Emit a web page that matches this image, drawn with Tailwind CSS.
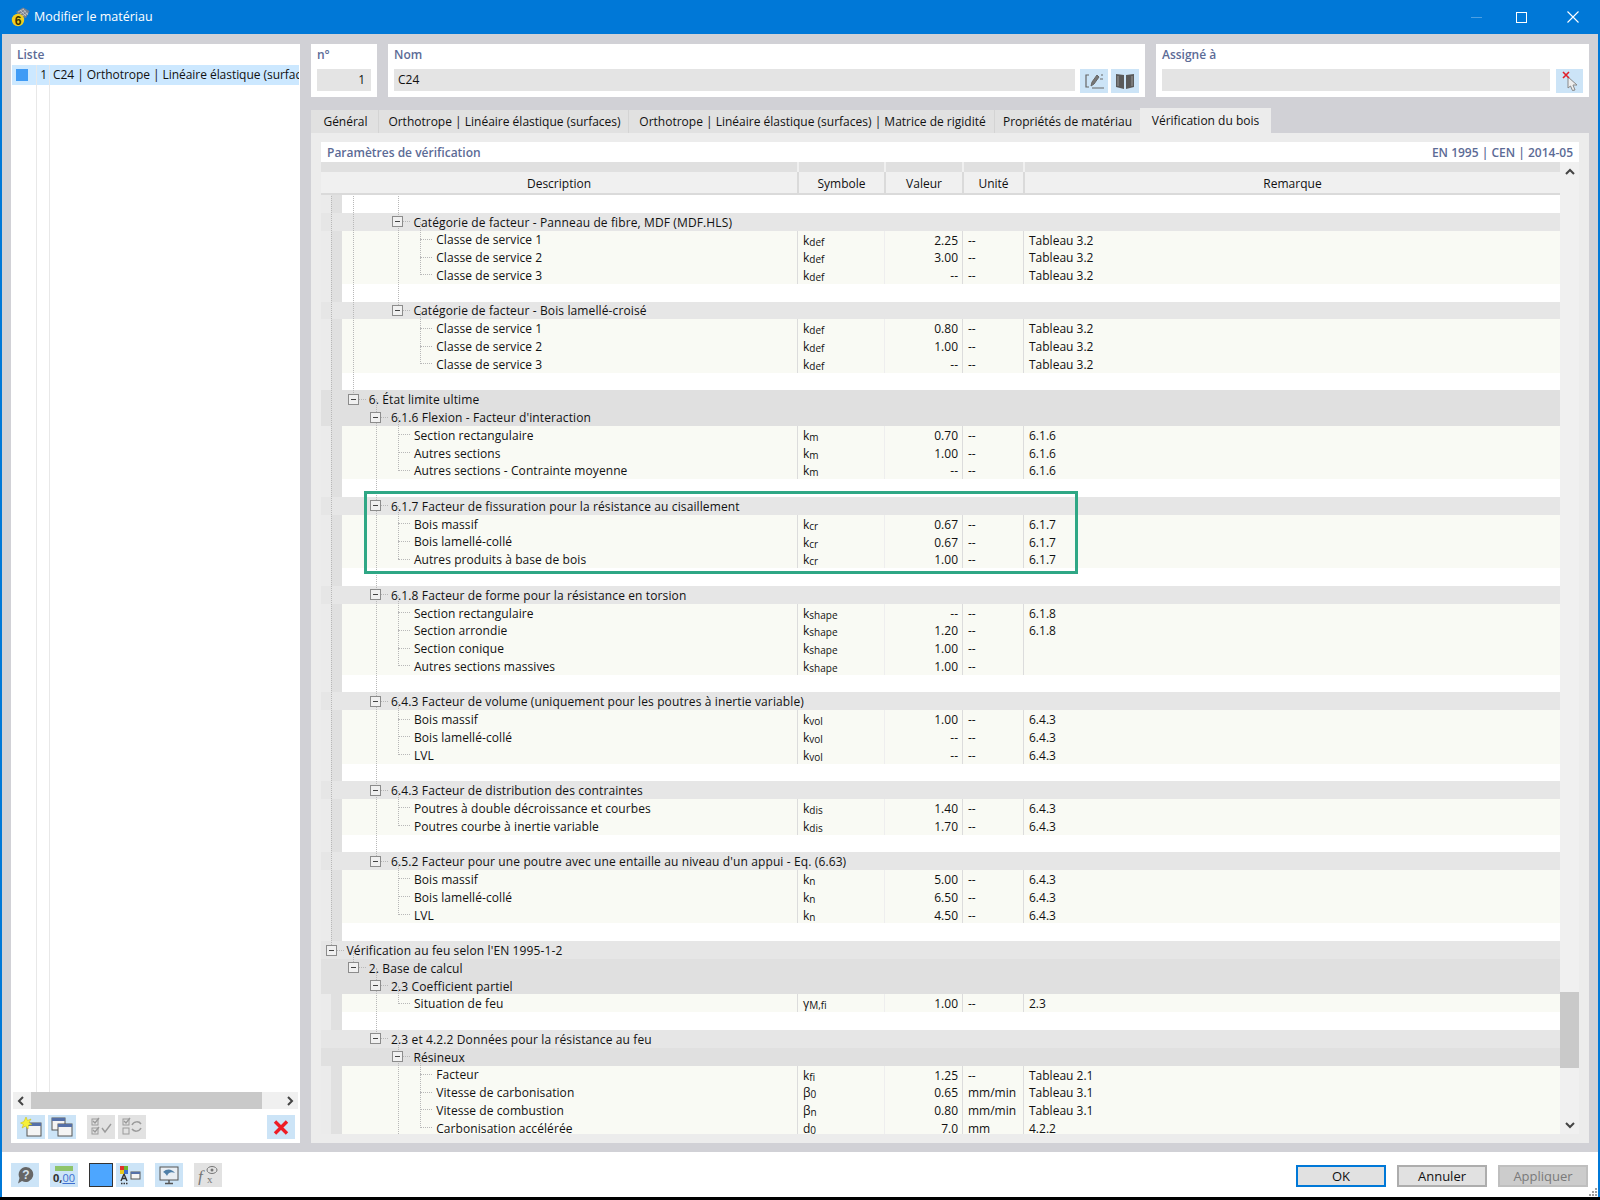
<!DOCTYPE html>
<html lang="fr">
<head>
<meta charset="UTF-8">
<title>Modifier le matériau</title>
<script src="https://cdn.jsdelivr.net/npm/@tailwindcss/browser@4"></script>
</head>
<body class="bg-black">
<div class="w-[1600px] h-[1197px] flex flex-col overflow-hidden border-x-2 border-[#0078d7] font-['Open_Sans','Noto_Sans',sans-serif] text-[12px] text-[#111]">

  <!-- title bar -->
  <header class="h-[34px] flex-none bg-[#0078d7] flex items-center text-white">
    <svg class="ml-[8px] w-[20px] h-[20px]" viewBox="0 0 20 20">
      <path d="M6 5 L13 0.5 L19.5 4 L16 11 L9 9 Z" fill="#77808c"/>
      <path d="M8 5 L14 2 M10 7 L16 4 M12 9 L18 6 M10 3 L16 9 M13 2 L18 8" stroke="#c4c8ce" stroke-width=".8"/>
      <circle cx="8" cy="13" r="6.2" fill="#f2cf1f"/>
      <text x="8" y="17.5" text-anchor="middle" font-size="12" font-weight="700" fill="#3a3200" font-family="Liberation Sans">6</text>
    </svg>
    <span class="ml-[4px] text-[12.5px]">Modifier le matériau</span>
    <div class="ml-auto flex items-center">
      <span class="w-[11px] h-px bg-white/30 mr-[34px]"></span>
      <span class="w-[11px] h-[11px] border border-white mr-[40px]"></span>
      <svg class="w-[12px] h-[12px] mr-[19px]" viewBox="0 0 12 12"><path d="M0.5 0.5 L11.5 11.5 M11.5 0.5 L0.5 11.5" stroke="#fff" stroke-width="1.1"/></svg>
    </div>
  </header>

  <!-- main area -->
  <main class="flex-1 min-h-0 bg-[#d1d1d6] flex gap-[11px] pl-[9px] pr-[9px] pt-[10px] pb-[9px]">

    <!-- list -->
    <aside class="w-[289px] flex-none bg-white flex flex-col">
      <div class="h-[21px] pl-[6px] pt-[2px] font-semibold text-[#5c6b96]">Liste</div>
      <div class="flex-1 min-h-0 relative mx-px">
        <div class="h-[20px] bg-[#cce8ff] flex items-center whitespace-nowrap overflow-hidden tracking-[-0.05px]">
          <span class="ml-[4px] w-[12px] h-[12px] bg-[#3f9bf5] flex-none -mt-[1px]"></span>
          <span class="w-[19px] flex-none text-right">1</span>
          <span class="ml-[6px]">C24 | Orthotrope | Linéaire élastique (surfaces)</span>
        </div>
        <span class="absolute left-[24px] top-0 bottom-0 w-px bg-[#e8e8e8]"></span>
        <span class="absolute left-[37px] top-0 bottom-0 w-px bg-[#e8e8e8]"></span>
      </div>
      <div class="h-[17px] mx-[2px] bg-[#f0f0f0] flex items-center justify-between relative z-10">
        <svg class="w-[16px] h-[12px]" viewBox="0 0 16 12"><path d="M10 2 L6 6 L10 10" fill="none" stroke="#444" stroke-width="2"/></svg>
        <span class="absolute left-[18px] w-[231px] h-full bg-[#c9c9c9]"></span>
        <svg class="w-[16px] h-[12px]" viewBox="0 0 16 12"><path d="M6 2 L10 6 L6 10" fill="none" stroke="#444" stroke-width="2"/></svg>
      </div>
      <div class="h-[34px] flex items-start pt-[6px] pl-[6px]">
        <span class="w-[28px] h-[24px] bg-[#cce4f7] flex items-center justify-center">
          <svg class="w-[22px] h-[20px]" viewBox="0 0 22 20"><rect x="7" y="6" width="14" height="13" fill="#f4f4f4" stroke="#555"/><rect x="7" y="6" width="14" height="3" fill="#5570a8"/><path d="M6 0 L7.5 3.5 L11 2 L9 5.5 L12 7.5 L8.5 8 L8 12 L5.5 9 L2 11 L3.5 7.5 L0.5 6 L4 4.5 Z" fill="#f6f03a" stroke="#c9b800" stroke-width=".5"/></svg>
        </span>
        <span class="ml-[3px] w-[28px] h-[24px] bg-[#cce4f7] flex items-center justify-center">
          <svg class="w-[22px] h-[20px]" viewBox="0 0 22 20"><rect x="1" y="1" width="13" height="12" fill="#f4f4f4" stroke="#555"/><rect x="1" y="1" width="13" height="3" fill="#5570a8"/><rect x="7" y="7" width="14" height="12" fill="#f4f4f4" stroke="#555"/><rect x="7" y="7" width="14" height="3" fill="#5570a8"/></svg>
        </span>
        <span class="ml-[11px] w-[28px] h-[24px] bg-[#e2e2e2] flex items-center justify-center">
          <svg class="w-[22px] h-[20px]" viewBox="0 0 22 20" fill="none" stroke="#9a9a9a"><rect x="2" y="2" width="6" height="6"/><rect x="2" y="11" width="6" height="6"/><path d="M3 4 L5 6 L9 1 M3 13 L5 15 L9 10 M12 11 L15 15 L21 7" stroke-width="1.4"/></svg>
        </span>
        <span class="ml-[3px] w-[28px] h-[24px] bg-[#e2e2e2] flex items-center justify-center">
          <svg class="w-[22px] h-[20px]" viewBox="0 0 22 20" fill="none" stroke="#9a9a9a"><rect x="2" y="2" width="6" height="6"/><rect x="2" y="11" width="6" height="6"/><path d="M3 4 L5 6 L9 1" stroke-width="1.4"/><path d="M11 8 C13 4 18 4 20 7 M20 11 C18 15 13 15 11 12" stroke-width="1.5"/></svg>
        </span>
        <span class="ml-[121px] w-[28px] h-[24px] bg-[#cce4f7] flex items-center justify-center">
          <svg class="w-[16px] h-[15px]" viewBox="0 0 16 15"><path d="M2 1.5 L14 13.5 M14 1.5 L2 13.5" stroke="#ee1c25" stroke-width="3.4"/></svg>
        </span>
      </div>
    </aside>

    <!-- right side -->
    <section class="flex-1 min-w-0 flex flex-col">
      <div class="h-[53px] flex-none flex gap-[11px]">
        <div class="w-[67px] bg-white px-[6px]">
          <div class="h-[25px] pt-[2px] font-semibold text-[#5c6b96]">n°</div>
          <div class="h-[22px] bg-[#e4e4e4] text-right pr-[6px] leading-[22px]">1</div>
        </div>
        <div class="w-[757px] bg-white px-[6px] ">
          <div class="h-[25px] pt-[2px] font-semibold text-[#5c6b96]">Nom</div>
          <div class="flex gap-[3px]">
            <div class="w-[681px] h-[22px] bg-[#e4e4e4] pl-[4px] leading-[22px] mr-[2px]">C24</div>
            <span class="w-[28px] h-[24px] bg-[#cce4f7] flex items-center justify-center">
              <svg class="w-[22px] h-[20px]" viewBox="0 0 22 20" fill="none" stroke="#666"><path d="M6 4 H3 V16 H6 M9 17 H21" stroke-width="1.2"/><path d="M8 15 L9 11 L14 4 L16 6 L11 13 Z" fill="#777"/><path d="M18 4 L20 4 M17 8 L20 8" stroke-width="1"/></svg>
            </span>
            <span class="w-[28px] h-[24px] bg-[#cce4f7] flex items-center justify-center">
              <svg class="w-[20px] h-[18px]" viewBox="0 0 20 18"><path d="M1 2 L9 3 V17 L1 15 Z M19 2 L11 3 V17 L19 15 Z" fill="#5a5a5a"/><path d="M3 4 V14 M17 4 V14" stroke="#999" stroke-width="1"/></svg>
            </span>
          </div>
        </div>
        <div class="flex-1 bg-white px-[6px]">
          <div class="h-[25px] pt-[2px] font-semibold text-[#5c6b96]">Assigné à</div>
          <div class="flex gap-[6px]">
            <div class="w-[388px] h-[22px] bg-[#e4e4e4]"></div>
            <span class="w-[27px] h-[24px] bg-[#cce4f7] flex items-center justify-center">
              <svg class="w-[20px] h-[20px]" viewBox="0 0 20 20"><path d="M8 6 L17 14 L13 14 L15 19 L12.5 19.5 L10.5 15 L8 17 Z" fill="#eee" stroke="#888"/><path d="M3 1 L9 7 M9 1 L3 7" stroke="#e0202a" stroke-width="1.6"/></svg>
            </span>
          </div>
        </div>
      </div>

      <!-- tabs -->
      <div class="h-[25px] mt-[11px] flex-none flex items-end whitespace-nowrap">
        <div class="w-[68px] h-[23px] pl-[2px] bg-[#e1e1e1] border-r border-[#d4d4d4] text-center leading-[23px]">Général</div>
        <div class="w-[250px] h-[23px] pl-[2px] bg-[#e1e1e1] border-r border-[#d4d4d4] text-center leading-[23px]">Orthotrope | Linéaire élastique (surfaces)</div>
        <div class="w-[366px] h-[23px] pl-[2px] bg-[#e1e1e1] border-r border-[#d4d4d4] text-center leading-[23px]">Orthotrope | Linéaire élastique (surfaces) | Matrice de rigidité</div>
        <div class="w-[145px] h-[23px] bg-[#e1e1e1] text-center leading-[23px]">Propriétés de matériau</div>
        <div class="w-[131px] h-[25px] bg-[#ececec] text-center leading-[25px]">Vérification du bois</div>
      </div>

      <!-- panel -->
      <div class="flex-1 min-h-0 bg-[#ececec] pt-[9px] pb-[9px] pl-[10px] pr-[10px] flex flex-col">
        <div class="h-[20px] flex-none bg-white flex items-center justify-between px-[6px] pt-[2px] font-semibold text-[#5c6b96]">
          <span>Paramètres de vérification</span><span>EN 1995 | CEN | 2014-05</span>
        </div>
        <div class="flex-1 min-h-0 flex">
          <div class="w-[1239px] flex-none flex flex-col">
            <!-- table head -->
            <div class="h-[10px] flex-none flex bg-[#e0e0e0]">
              <span class="w-[476px]"></span><span class="w-[87px] border-l-2 border-[#f0f0f0]"></span><span class="w-[78px] border-l-2 border-[#f0f0f0]"></span><span class="w-[61px] border-l-2 border-[#f0f0f0]"></span><span class="flex-1 border-l-2 border-[#f0f0f0]"></span>
            </div>
            <div class="h-[23px] flex-none flex bg-[#f0f0f0] border-b-2 border-[#dadada] text-center leading-[24px] font-medium">
              <span class="w-[476px]">Description</span><span class="w-[87px] border-l-2 border-[#dadada]">Symbole</span><span class="w-[78px] border-l-2 border-[#dadada]">Valeur</span><span class="w-[61px] border-l-2 border-[#dadada]">Unité</span><span class="flex-1 border-l-2 border-[#dadada]">Remarque</span>
            </div>
            <!-- table body, filled below -->
            <div id="rows" class="relative flex-1 min-h-0 overflow-hidden bg-white">
              <!-- highlight around 6.1.7 -->
              <div class="absolute left-[43px] top-[296px] w-[714px] h-[83px] border-[3px] border-[#2fa785] z-20"></div>
            </div>
          </div>
          <!-- scrollbar -->
          <div class="flex-1 bg-[#f0f0f0] relative flex flex-col items-center">
            <svg class="mt-[5px] w-[12px] h-[10px]" viewBox="0 0 12 10"><path d="M2 7 L6 3 L10 7" fill="none" stroke="#444" stroke-width="2"/></svg>
            <span class="absolute left-0 right-0 top-[830px] h-[76px] bg-[#c9c9c9]"></span>
            <svg class="mt-auto mb-[4px] w-[12px] h-[10px]" viewBox="0 0 12 10"><path d="M2 3 L6 7 L10 3" fill="none" stroke="#444" stroke-width="2"/></svg>
          </div>
        </div>
      </div>
    </section>
  </main>

  <!-- footer -->
  <footer class="h-[45px] flex-none bg-white flex items-start pt-[11px] pl-[9px] relative">
    <span class="w-[28px] h-[24px] bg-[#cce4f7] flex items-center justify-center">
      <svg class="w-[20px] h-[20px]" viewBox="0 0 20 20"><path d="M11 2 A7.5 7.5 0 1 1 7 16 L3 18.5 L4.5 13 A7.5 7.5 0 0 1 11 2 Z" fill="#666"/><text x="11" y="14" text-anchor="middle" font-size="12" font-weight="700" fill="#d5e2ee" font-family="Liberation Sans">?</text></svg>
    </span>
    <span class="ml-[11px] w-[28px] h-[24px] bg-[#cce4f7] flex flex-col items-center justify-center">
      <span class="w-[18px] h-[5px] bg-[#8fc46a]"></span>
      <span class="text-[11px] leading-[14px] font-bold text-[#333]">0,<span class="text-[#3c6fd0] underline font-normal">00</span></span>
    </span>
    <span class="ml-[11px] w-[24px] h-[24px] bg-[#4da6ff] border border-[#333]"></span>
    <span class="ml-[3px] w-[28px] h-[24px] bg-[#cce4f7] flex items-center justify-center">
      <svg class="w-[22px] h-[20px]" viewBox="0 0 22 20"><rect x="1" y="1" width="4" height="4" fill="#e0322c"/><rect x="5" y="1" width="4" height="4" fill="#6ab52e"/><rect x="1" y="5" width="4" height="4" fill="#e8c81e"/><rect x="5" y="5" width="4" height="4" fill="#3c6fd0"/><path d="M5 9 L2 16 M5 9 L8 16 M3 13.5 H7" stroke="#333" stroke-width="1.4"/><path d="M2 18.5 H3.5 M4.5 18.5 H6 M7 18.5 H8.5" stroke="#333" stroke-width="1.6"/><rect x="12" y="7" width="9" height="7" fill="#f4f4f4" stroke="#555"/><rect x="12" y="7" width="9" height="2" fill="#5570a8"/></svg>
    </span>
    <span class="ml-[11px] w-[28px] h-[24px] bg-[#cce4f7] flex items-center justify-center">
      <svg class="w-[22px] h-[20px]" viewBox="0 0 22 20"><rect x="2" y="2" width="18" height="13" fill="#e8eef4" stroke="#555"/><path d="M5 7 C9 3 14 4 17 8 C13 6 10 8 9 11 C8 9 7 8 5 7 Z" fill="#4f7fa8"/><path d="M11 15 V18 M7 18.5 H15" stroke="#555" stroke-width="1.4"/></svg>
    </span>
    <span class="ml-[11px] w-[28px] h-[24px] bg-[#e2e2e2] flex items-center justify-center">
      <svg class="w-[22px] h-[20px]" viewBox="0 0 22 20" fill="#777"><text x="1" y="17" font-size="17" font-style="italic" font-family="Liberation Serif">f</text><text x="10" y="18" font-size="11" font-family="Liberation Serif">x</text><ellipse cx="15" cy="5" rx="5" ry="3.5" fill="none" stroke="#777"/><circle cx="15" cy="5" r="1.5"/></svg>
    </span>
    <div class="absolute right-[10px] top-[13px] flex gap-[11px] text-[13px]">
      <button class="w-[90px] h-[22px] bg-[#e1e1e1] border-2 border-[#0078d7] leading-[18px]">OK</button>
      <button class="w-[90px] h-[22px] bg-[#e1e1e1] border-2 border-[#adadad] leading-[18px]">Annuler</button>
      <button class="w-[90px] h-[22px] bg-[#cccccc] border-2 border-[#bfbfbf] leading-[18px] text-[#7a7a7a]">Appliquer</button>
    </div>
    <svg class="absolute right-0 bottom-0 w-[10px] h-[10px]" viewBox="0 0 10 10" fill="#a0a0a0"><rect x="7" y="1" width="2" height="2"/><rect x="4" y="4" width="2" height="2"/><rect x="7" y="4" width="2" height="2"/><rect x="1" y="7" width="2" height="2"/><rect x="4" y="7" width="2" height="2"/><rect x="7" y="7" width="2" height="2"/></svg>
  </footer>
</div>

<script>
// h = group header, H = darker group header, d = data row, b = blank
const L = (lvl, text, s, sub, val, unit, rem) => ['d', lvl, text, s, sub, val, unit, rem]
const data = [
  ['b'],
  ['h', 3, 'Catégorie de facteur - Panneau de fibre, MDF (MDF.HLS)'],
  L(4, 'Classe de service 1', 'k', 'def', '2.25', '--', 'Tableau 3.2'),
  L(4, 'Classe de service 2', 'k', 'def', '3.00', '--', 'Tableau 3.2'),
  L(4, 'Classe de service 3', 'k', 'def', '--', '--', 'Tableau 3.2'),
  ['b'],
  ['h', 3, 'Catégorie de facteur - Bois lamellé-croisé'],
  L(4, 'Classe de service 1', 'k', 'def', '0.80', '--', 'Tableau 3.2'),
  L(4, 'Classe de service 2', 'k', 'def', '1.00', '--', 'Tableau 3.2'),
  L(4, 'Classe de service 3', 'k', 'def', '--', '--', 'Tableau 3.2'),
  ['b'],
  ['H', 1, '6. État limite ultime'],
  ['H', 2, "6.1.6 Flexion - Facteur d'interaction"],
  L(3, 'Section rectangulaire', 'k', 'm', '0.70', '--', '6.1.6'),
  L(3, 'Autres sections', 'k', 'm', '1.00', '--', '6.1.6'),
  L(3, 'Autres sections - Contrainte moyenne', 'k', 'm', '--', '--', '6.1.6'),
  ['b'],
  ['h', 2, '6.1.7 Facteur de fissuration pour la résistance au cisaillement'],
  L(3, 'Bois massif', 'k', 'cr', '0.67', '--', '6.1.7'),
  L(3, 'Bois lamellé-collé', 'k', 'cr', '0.67', '--', '6.1.7'),
  L(3, 'Autres produits à base de bois', 'k', 'cr', '1.00', '--', '6.1.7'),
  ['b'],
  ['h', 2, '6.1.8 Facteur de forme pour la résistance en torsion'],
  L(3, 'Section rectangulaire', 'k', 'shape', '--', '--', '6.1.8'),
  L(3, 'Section arrondie', 'k', 'shape', '1.20', '--', '6.1.8'),
  L(3, 'Section conique', 'k', 'shape', '1.00', '--', ''),
  L(3, 'Autres sections massives', 'k', 'shape', '1.00', '--', ''),
  ['b'],
  ['h', 2, '6.4.3 Facteur de volume (uniquement pour les poutres à inertie variable)'],
  L(3, 'Bois massif', 'k', 'vol', '1.00', '--', '6.4.3'),
  L(3, 'Bois lamellé-collé', 'k', 'vol', '--', '--', '6.4.3'),
  L(3, 'LVL', 'k', 'vol', '--', '--', '6.4.3'),
  ['b'],
  ['h', 2, '6.4.3 Facteur de distribution des contraintes'],
  L(3, 'Poutres à double décroissance et courbes', 'k', 'dis', '1.40', '--', '6.4.3'),
  L(3, 'Poutres courbe à inertie variable', 'k', 'dis', '1.70', '--', '6.4.3'),
  ['b'],
  ['h', 2, "6.5.2 Facteur pour une poutre avec une entaille au niveau d'un appui - Eq. (6.63)"],
  L(3, 'Bois massif', 'k', 'n', '5.00', '--', '6.4.3'),
  L(3, 'Bois lamellé-collé', 'k', 'n', '6.50', '--', '6.4.3'),
  L(3, 'LVL', 'k', 'n', '4.50', '--', '6.4.3'),
  ['b'],
  ['h', 0, "Vérification au feu selon l'EN 1995-1-2"],
  ['H', 1, '2. Base de calcul'],
  ['H', 2, '2.3 Coefficient partiel'],
  L(3, 'Situation de feu', 'γ', 'M,fi', '1.00', '--', '2.3'),
  ['b'],
  ['h', 2, '2.3 et 4.2.2 Données pour la résistance au feu'],
  ['H', 3, 'Résineux'],
  L(4, 'Facteur', 'k', 'fi', '1.25', '--', 'Tableau 2.1'),
  L(4, 'Vitesse de carbonisation', 'β', '0', '0.65', 'mm/min', 'Tableau 3.1'),
  L(4, 'Vitesse de combustion', 'β', 'n', '0.80', 'mm/min', 'Tableau 3.1'),
  L(4, 'Carbonisation accélérée', 'd', '0', '7.0', 'mm', '4.2.2'),
]

const ROW = 17.78
const boxX = lvl => 10 + 22.3 * lvl // centre of a tree box, from the table's left edge
const rows = document.getElementById('rows')
let html = ''

data.forEach(r => {
  const kind = r[0]
  if (kind === 'b') {
    html += `<div class="flex bg-[linear-gradient(to_right,#ebebeb_10px,#e0e0e0_10px,#e0e0e0_21px,#ffffff_21px)]" style="height:${ROW}px"></div>`
  } else if (kind === 'd') {
    const [, lvl, text, s, sub, val, unit, rem] = r
    html += `<div class="flex items-center whitespace-nowrap bg-[linear-gradient(to_right,#ebebeb_10px,#e0e0e0_10px,#e0e0e0_21px,#f9faf4_21px)]" style="height:${ROW}px">
      <span class="w-[476px] flex-none flex items-center"><span class="flex-none" style="width:${boxX(lvl)}px"></span><span class="w-[12px] h-0 border-t border-dotted border-[#b8b8b8] mr-[4px]"></span><span class="relative top-[1px] tracking-[0.08px]">${text}</span></span>
      <span class="w-[87px] flex-none h-full pl-[5px] border-l border-[#dcdcdc] leading-[20px]">${s}<span class="text-[10px] relative top-[1px]">${sub}</span></span>
      <span class="w-[78px] flex-none h-full text-right pr-[4px] border-l border-[#eeeeee] leading-[20px]">${val}</span>
      <span class="w-[61px] flex-none h-full pl-[5px] border-l border-[#dcdcdc] leading-[20px]">${unit}</span>
      <span class="flex-1 h-full pl-[5px] border-l border-[#dcdcdc] leading-[20px]">${rem}</span>
    </div>`
  } else {
    const [, lvl, text] = r
    const bg = kind === 'H' ? 'bg-[#e0e0e0]' : 'bg-[#e6e6e6]'
    html += `<div class="flex items-center whitespace-nowrap ${bg}" style="height:${ROW}px">
      <span class="flex-none" style="width:${boxX(lvl) - 5.5}px"></span>
      <span class="relative z-10 w-[11px] h-[11px] flex-none bg-[#f0f0f0] border-[1.5px] border-[#8c8c8c] flex items-center justify-center"><span class="w-[5px] h-px bg-[#444]"></span></span>
      <span class="w-[7px] h-0 border-t border-dotted border-[#b8b8b8] mr-[3px]"></span><span class="relative top-[1px] tracking-[0.12px]">${text}</span>
    </div>`
  }
})

// vertical tree lines: [level, first row, last row], centre of row to centre of row
const guides = [
  [0, -1, 42], [1, -1, 11], [1, 42, 43], [2, 11, 37], [2, 43, 47],
  [3, -1, 6], [3, 12, 15], [3, 17, 20], [3, 22, 26], [3, 28, 31], [3, 33, 35], [3, 37, 40], [3, 44, 45], [3, 47, 54],
  [4, 1, 4], [4, 6, 9], [4, 48, 52],
]
guides.forEach(([lvl, a, b]) => {
  const top = (a + 0.5) * ROW
  const h = (b - a) * ROW
  html += `<span class="absolute w-0 border-l border-dotted border-[#b8b8b8]" style="left:${Math.round(boxX(lvl))}px;top:${top}px;height:${h}px"></span>`
})
rows.insertAdjacentHTML('beforeend', html)
</script>
</body>
</html>
